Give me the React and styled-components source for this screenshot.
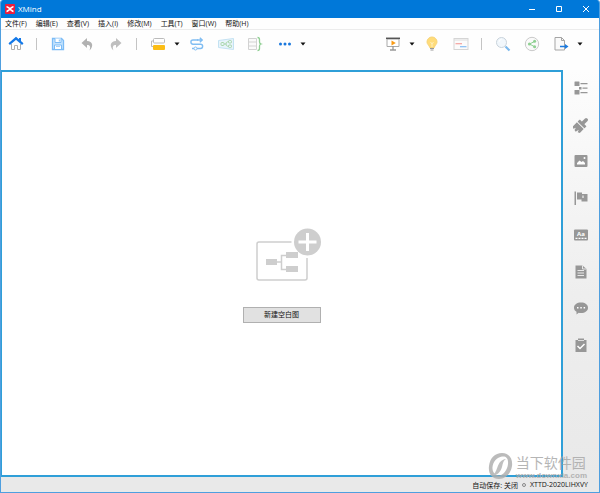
import React from 'react';
import styled, { createGlobalStyle } from 'styled-components';

const GlobalStyle = createGlobalStyle`
  * {
    box-sizing: border-box;
  }

  body {
    margin: 0;
    background: #fff;
    font-family: "Open Sans", "Noto Sans CJK SC", sans-serif;
    font-size: 7px;
    color: #111;
  }

  button {
    font: inherit;
    color: inherit;
    padding: 0;
    border: none;
    background: none;
    cursor: pointer;
  }

  svg {
    display: block;
  }
`;

const Window = styled.div`
  position: relative;
  display: flex;
  flex-direction: column;
  min-height: 100vh;
  border: 1px solid #4f9fdf;
  border-top: none;
  border-radius: 3px 3px 0 0;
  overflow: hidden;
  background: #fefefe;
`;

const TitleBar = styled.header`
  display: flex;
  align-items: center;
  height: 18px;
  padding-left: 4px;
  background: #0078d9;
  color: #fff;
`;

const AppTitle = styled.h1`
  flex: 1;
  margin: 0;
  padding-left: 3px;
  font-size: 8px;
  font-weight: 400;
  line-height: 12px;
`;

const WindowButton = styled.button`
  display: flex;
  align-items: center;
  justify-content: center;
  width: 27px;
  height: 18px;
`;

const MenuBar = styled.nav`
  display: flex;
  gap: 9px;
  height: 12px;
  padding-left: 4px;
  border-bottom: 1px solid #ececec;
`;

const MenuItem = styled.button`
  line-height: 11px;
  white-space: nowrap;
`;

const Toolbar = styled.div`
  display: flex;
  justify-content: space-between;
  align-items: center;
  height: 40px;
  padding: 0 14px 12px 0;
`;

const ToolGroup = styled.div`
  display: flex;
  align-items: center;
`;

const ToolButton = styled.button`
  display: flex;
  align-items: center;
  justify-content: center;
  width: 29px;
  height: 24px;
`;

const CaretButton = styled(ToolButton)`
  width: 10px;
`;

const Separator = styled.div`
  width: 1px;
  height: 12px;
  margin: 0 6px;
  background: #c4c4c4;
`;

const Body = styled.div`
  display: flex;
  flex: 1;
`;

const Canvas = styled.main`
  display: flex;
  flex: 1;
  flex-direction: column;
  align-items: center;
  justify-content: center;
  gap: 23px;
  padding-top: 4px;
  border: 2px solid #2f9fd8;
  border-left-width: 1px;
  background: #fff;
`;

const NewMapButton = styled.button`
  width: 78px;
  height: 16px;
  border: 1px solid #b0b0b0;
  background: #e1e1e1;
  line-height: 14px;
`;

const Sidebar = styled.aside`
  width: 36px;
  background: linear-gradient(#fdfdfd, #eee 55%, #e9e9e9);
`;

const SideTools = styled.div`
  display: flex;
  flex-direction: column;
  justify-content: space-between;
  height: 293px;
`;

const SideButton = styled.button`
  display: flex;
  align-items: center;
  justify-content: center;
  height: 36px;
  color: #979797;
`;

const StatusBar = styled.footer`
  display: flex;
  align-items: center;
  justify-content: flex-end;
  gap: 4px;
  height: 15px;
  padding-right: 11px;
  background: #e9e9e9;
`;

const Dot = styled.span`
  width: 4px;
  height: 4px;
  border: 1px solid #888;
  border-radius: 50%;
`;

const Watermark = styled.div`
  position: absolute;
  right: 12px;
  bottom: 12px;
  display: flex;
  align-items: center;
  gap: 3px;
  color: #a9a9a9;
  opacity: 0.85;
  pointer-events: none;
`;

const WatermarkName = styled.div`
  font-family: "Noto Sans CJK SC", sans-serif;
  font-size: 14px;
  line-height: 18px;
`;

const WatermarkUrl = styled.div`
  font-family: "Liberation Sans", sans-serif;
  font-size: 8px;
  font-weight: 700;
  line-height: 9px;
`;

const Icon = ({ w = 16, h = 16, children }) => (
  <svg width={w} height={h} viewBox={`0 0 ${w} ${h}`} fill="none" aria-hidden="true">
    {children}
  </svg>
);

const Caret = ({ label }) => (
  <CaretButton aria-label={label}>
    <Icon w={6} h={4}><path d="M0.5 0.5h5L3 3.5z" fill="#111" /></Icon>
  </CaretButton>
);

const LogoIcon = () => (
  <Icon w={10} h={10}>
    <rect width="10" height="10" rx="1" fill="#ee1c3c" />
    <path d="M1.500 2.800C3 2.800 3.800 4.500 5 4.500s2-1.700 3.500-1.700M1.500 7.400C3 7.400 3.800 5.500 5 5.500s2 1.900 3.500 1.900" stroke="#fff" strokeWidth="1.600" />
  </Icon>
);

const HomeIcon = () => (
  <Icon>
    <path d="M3.500 8v5.500h3v-4h3v4h3V8" fill="#fff" stroke="#b0b0b0" />
    <path d="M1.200 8.200L8 2.300l6.800 5.900" stroke="#1479e8" strokeWidth="2.200" />
    <path d="M11 2h2v4l-2-1.800z" fill="#1479e8" />
  </Icon>
);

const SaveIcon = () => (
  <Icon>
    <path d="M2.500 2.500h9l2 2v9h-11z" fill="#c5e3fd" stroke="#7cbcf6" strokeWidth="1.300" />
    <path d="M5 2.500v4h6v-4" fill="#fff" stroke="#7cbcf6" />
    <path d="M9.300 3.500v2" stroke="#7cbcf6" />
    <path d="M4.500 13V9h7v4" fill="#fff" stroke="#7cbcf6" />
    <path d="M6 10.500h4" stroke="#a9d2f8" />
  </Icon>
);

const UndoIcon = () => (
  <Icon>
    <path d="M2.500 7L8 2v3c5.800.3 7 5.500 2.500 9.500C11.800 11 11.200 9 8 9v3z" fill="#b2b2b2" />
  </Icon>
);

const RedoIcon = () => (
  <Icon>
    <path d="M13.500 7L8 2v3C2.200 5.300 1 10.500 5.500 14.500 4.200 11 4.800 9 8 9v3z" fill="#bfbfbf" />
  </Icon>
);

const TopicIcon = () => (
  <Icon>
    <rect x="3.500" y="2.500" width="11" height="4.500" rx="1" fill="#fff" stroke="#bbb" />
    <path d="M3.500 5H1.500v5.500h2" stroke="#bbb" />
    <rect x="3" y="9" width="12" height="5" rx="1" fill="#fbbd16" />
  </Icon>
);

const RelationshipIcon = () => (
  <Icon>
    <path d="M9 4H4a2.100 2.100 0 000 4.200h7.500a2.100 2.100 0 010 4.300H8M5 12.500H3" stroke="#80bdf2" strokeWidth="1.400" />
    <path d="M8 4h5M10.800 1.700L13.300 4l-2.500 2.300" stroke="#80bdf2" strokeWidth="1.300" />
    <circle cx="6.500" cy="12.500" r="1.500" fill="#fff" stroke="#80bdf2" />
  </Icon>
);

const BoundaryIcon = () => (
  <Icon>
    <path d="M.5 4.500l15-2v11l-15-2z" fill="#e8f4fb" stroke="#c3e2f2" />
    <path d="M6 8h2M11 5.800H9.500Q8 6 8 8t1.500 2.200H11" stroke="#a8d6aa" />
    <rect x="3" y="6.500" width="3" height="3" rx="1" stroke="#a8d6aa" />
    <rect x="10.500" y="4.500" width="3" height="2.500" rx="1" stroke="#a8d6aa" />
    <rect x="10.500" y="9" width="3" height="2.500" rx="1" stroke="#a8d6aa" />
  </Icon>
);

const SummaryIcon = () => (
  <Icon>
    <path d="M1.500 2.500h8v11h-8zM1.500 6h8M1.500 10h8" fill="#fafafa" stroke="#d2d2d2" />
    <path d="M10.500 1.500q2 0 2 2v2.500q0 1.500 1.500 2-1.500.5-1.500 2v2.500q0 2-2 2" stroke="#8fcf93" strokeWidth="1.300" />
  </Icon>
);

const MoreIcon = () => (
  <Icon>
    <g fill="#1a78dd">
      <circle cx="4.500" cy="8" r="1.500" />
      <circle cx="9" cy="8" r="1.500" />
      <circle cx="13.500" cy="8" r="1.500" />
    </g>
  </Icon>
);

const PresentIcon = () => (
  <Icon>
    <path d="M2 3h12v7.500H2z" fill="#fff" stroke="#aaa" />
    <path d="M1 2.300h14" stroke="#555" strokeWidth="1.500" />
    <path d="M6.500 4.500v5l4.300-2.500z" fill="#f99b16" />
    <path d="M8 10.500v3" stroke="#777" />
    <path d="M5 14h6" stroke="#666" />
  </Icon>
);

const BulbIcon = () => (
  <Icon>
    <path d="M8 1a5 5 0 00-5 5c0 2.500 2.300 3 2.700 5.500h4.600C10.700 9 13 8.500 13 6a5 5 0 00-5-5z" fill="#ffdc7a" stroke="#f8d477" />
    <path d="M6.500 6l1.500 2 1.500-2M8 8v3" stroke="#fff0bd" />
    <path d="M6 12.500h4M6.500 14h3" stroke="#999" />
  </Icon>
);

const CardIcon = () => (
  <Icon>
    <rect x="1" y="2.500" width="14" height="11" fill="#fbfbfb" stroke="#d5d5d5" />
    <path d="M1 4h14" stroke="#ddd" />
    <path d="M2.500 7.700H9" stroke="#f3a19e" strokeWidth="1.200" />
    <path d="M7 10.700h6.500" stroke="#85bdf3" strokeWidth="1.200" />
  </Icon>
);

const SearchIcon = () => (
  <Icon>
    <circle cx="6.500" cy="6.500" r="5" fill="#f1f7fc" stroke="#c9d3db" />
    <path d="M4 6a2.500 2.500 0 012.500-2.500" stroke="#fff" />
    <path d="M10.500 10.500l4 4" stroke="#7bb8ed" strokeWidth="2.200" />
  </Icon>
);

const ShareIcon = () => (
  <Icon>
    <circle cx="8" cy="8" r="6.700" fill="#fafafa" stroke="#c9c9c9" />
    <path d="M10.500 5.500L5.500 8l5 2.700" stroke="#8fd092" />
    <g fill="#8fd092">
      <circle cx="5.500" cy="8" r="1.600" />
      <circle cx="10.600" cy="5.300" r="1.500" />
      <circle cx="10.600" cy="10.700" r="1.500" />
    </g>
  </Icon>
);

const ExportIcon = () => (
  <Icon>
    <path d="M2 1.500h6.500l3 3v9.500H2z" fill="#fafafa" stroke="#a5a5a5" />
    <path d="M8.500 1.500v3h3" stroke="#a5a5a5" />
    <path d="M7 10.500h6" stroke="#1c7be0" strokeWidth="1.500" />
    <path d="M12 8l3.500 2.500L12 13z" fill="#1c7be0" />
  </Icon>
);

const OutlineIcon = () => (
  <Icon>
    <g fill="currentColor">
      <rect x="1.500" y="1.500" width="5" height="4.500" rx="0.500" />
      <rect x="1.500" y="10" width="5" height="4.500" rx="0.500" />
      <rect x="6" y="7" width="2.500" height="2.500" />
      <path d="M7.500 3h7v1.300h-7zM9.500 7.500h5v1.300h-5zM7.500 12h7v1.300h-7z" />
    </g>
  </Icon>
);

const BrushIcon = () => (
  <Icon>
    <g transform="rotate(45 8 8)" fill="currentColor">
      <rect x="6.200" y="-1" width="3.600" height="7" rx="1.500" />
      <rect x="3.200" y="5" width="9.600" height="3" rx="0.500" />
      <path d="M3.200 9h9.600v5.500l-2 1-1-2.500-.8 3.500-2-.3-.7-2.700-1 2.500-2.100-.5z" />
    </g>
  </Icon>
);

const ImageIcon = () => (
  <Icon>
    <rect x="1.500" y="2" width="13" height="12" rx="1" fill="currentColor" />
    <path d="M4 11.500V10l2.500-2.500L8.500 9 10 8l2 2v1.500z" fill="#fff" />
    <circle cx="11.500" cy="5" r="1" fill="#fff" />
  </Icon>
);

const FlagIcon = () => (
  <Icon>
    <path d="M1.500 1.500H3V15H1.500zM4 2.500h5V4h5.500v7.500H8.500V9.500H4z" fill="currentColor" />
    <path d="M9 5.500h2v2.500H9z" fill="#ccc" />
  </Icon>
);

const LabelIcon = () => (
  <Icon>
    <rect x="1" y="2.500" width="14" height="11" rx="1" fill="currentColor" />
    <text x="8" y="9" fill="#fff" fontSize="6" fontWeight="700" textAnchor="middle">Aa</text>
    <path d="M2.500 11.300h11" stroke="#fff" strokeWidth="1.300" strokeDasharray="2 1" />
  </Icon>
);

const NotesIcon = () => (
  <Icon>
    <path d="M2.500 1.500h7L13.500 5v9.500h-11z" fill="currentColor" />
    <path d="M9.500 1.500V5h4M4.500 6.500H11M4.500 9H11M4.500 11.500H11" stroke="#e8e8e8" />
  </Icon>
);

const CommentIcon = () => (
  <Icon>
    <path d="M8 2.500c4 0 7 2 7 5.200S12 13 8 13c-1 0-1.500 0-2.300-.3L3.500 14.500v-2.700C2 11 1 9.500 1 7.700 1 4.500 4 2.500 8 2.500z" fill="currentColor" />
    <path d="M4 7h1.500v1.500H4zM7.300 7h1.500v1.500H7.300zM10.600 7h1.500v1.500h-1.500z" fill="#fff" />
  </Icon>
);

const TaskIcon = () => (
  <Icon>
    <path d="M2.500 3H5V1.500h6V3h2.500v12h-11z" fill="currentColor" />
    <path d="M5 3.500h6" stroke="#ddd" />
    <path d="M4.500 9l2.500 2.500 4.500-4.500" stroke="#fff" strokeWidth="1.500" />
  </Icon>
);

const NewMapIcon = () => (
  <Icon w={82} h={56}>
    <g transform="translate(15 0)">
      <path d="M35.500 14H3a2 2 0 00-2 2v34a2 2 0 002 2h46a2 2 0 002-2V30" stroke="#cecece" strokeWidth="1.500" />
      <g fill="#cecece">
        <rect x="10" y="31" width="11" height="6" />
        <rect x="30" y="24" width="12" height="6" />
        <rect x="30" y="38" width="12" height="6" />
        <circle cx="51.500" cy="14" r="13.500" />
      </g>
      <path d="M21 34h4.500M30 27.500h-4.500v14H30" stroke="#cecece" strokeWidth="1.500" />
      <path d="M42.500 14h18M51.500 5v18" stroke="#fff" strokeWidth="3" />
    </g>
  </Icon>
);

const WatermarkLogo = () => (
  <Icon w={26} h={28}>
    <path fillRule="evenodd" d="M15 1C22 1 26 7 25 14S19 27 12 27 1 22 2 14 8 1 15 1zM15 4.500C10 5 6 10 5.500 15S8 23.500 12 23.500 20.500 18 21 12 19 4 15 4.500z" fill="#b0b0b0" />
    <path d="M3 24c5-1 6-5 7.500-9S14 7.500 19 7c-3 2-3 4.500-4 8-1.300 5-5 9-12 9z" fill="#b5b5b5" />
  </Icon>
);

const menus = ['文件(F)', '编辑(E)', '查看(V)', '插入(I)', '修改(M)', '工具(T)', '窗口(W)', '帮助(H)'];

const sideTools = [
  { label: '大纲', icon: <OutlineIcon /> },
  { label: '格式', icon: <BrushIcon /> },
  { label: '图片', icon: <ImageIcon /> },
  { label: '图标', icon: <FlagIcon /> },
  { label: '标签', icon: <LabelIcon /> },
  { label: '备注', icon: <NotesIcon /> },
  { label: '批注', icon: <CommentIcon /> },
  { label: '任务', icon: <TaskIcon /> },
];

const App = () => {
  return (
    <>
      <GlobalStyle />
      <Window>
        <TitleBar>
          <LogoIcon />
          <AppTitle>XMind</AppTitle>
          <WindowButton aria-label="最小化">
            <Icon w={8} h={8}><path d="M1 4.500h6" stroke="#fff" /></Icon>
          </WindowButton>
          <WindowButton aria-label="最大化">
            <Icon w={8} h={8}><path d="M1.500 1.500h5v5h-5z" stroke="#fff" /></Icon>
          </WindowButton>
          <WindowButton aria-label="关闭">
            <Icon w={8} h={8}><path d="M1 1l6 6M7 1L1 7" stroke="#fff" /></Icon>
          </WindowButton>
        </TitleBar>

        <MenuBar>
          {menus.map((menu) => (
            <MenuItem key={menu}>{menu}</MenuItem>
          ))}
        </MenuBar>

        <Toolbar>
          <ToolGroup>
            <ToolButton aria-label="主页"><HomeIcon /></ToolButton>
            <Separator />
            <ToolButton aria-label="保存"><SaveIcon /></ToolButton>
            <ToolButton aria-label="撤销"><UndoIcon /></ToolButton>
            <ToolButton aria-label="重做"><RedoIcon /></ToolButton>
            <Separator />
            <ToolButton aria-label="主题"><TopicIcon /></ToolButton>
            <Caret label="主题选项" />
            <ToolButton aria-label="联系"><RelationshipIcon /></ToolButton>
            <ToolButton aria-label="外框"><BoundaryIcon /></ToolButton>
            <ToolButton aria-label="概要"><SummaryIcon /></ToolButton>
            <ToolButton aria-label="更多"><MoreIcon /></ToolButton>
            <Caret label="更多选项" />
          </ToolGroup>
          <ToolGroup>
            <ToolButton aria-label="演示"><PresentIcon /></ToolButton>
            <Caret label="演示选项" />
            <ToolButton aria-label="头脑风暴"><BulbIcon /></ToolButton>
            <ToolButton aria-label="甘特图"><CardIcon /></ToolButton>
            <Separator />
            <ToolButton aria-label="搜索"><SearchIcon /></ToolButton>
            <ToolButton aria-label="分享"><ShareIcon /></ToolButton>
            <ToolButton aria-label="导出"><ExportIcon /></ToolButton>
            <Caret label="导出选项" />
          </ToolGroup>
        </Toolbar>

        <Body>
          <Canvas>
            <NewMapIcon />
            <NewMapButton>新建空白图</NewMapButton>
          </Canvas>
          <Sidebar>
            <SideTools>
              {sideTools.map(({ label, icon }) => (
                <SideButton key={label} aria-label={label}>{icon}</SideButton>
              ))}
            </SideTools>
          </Sidebar>
        </Body>

        <StatusBar>
          <span>自动保存: 关闭</span>
          <Dot />
          <span>XTTD-2020LIHXVY</span>
        </StatusBar>

        <Watermark>
          <WatermarkLogo />
          <div>
            <WatermarkName>当下软件园</WatermarkName>
            <WatermarkUrl>www.downxia.com</WatermarkUrl>
          </div>
        </Watermark>
      </Window>
    </>
  );
};

export default App;
